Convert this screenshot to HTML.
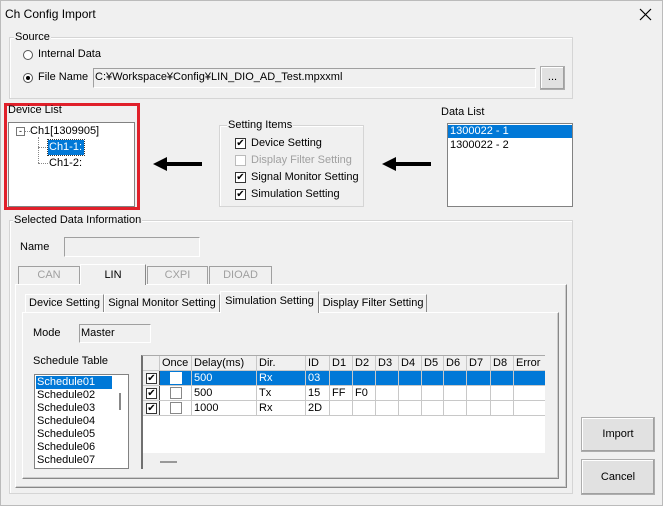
<!DOCTYPE html>
<html><head><style>
*{box-sizing:border-box;margin:0;padding:0}
body{width:663px;height:506px;background:#f0f0f0;font-family:"Liberation Sans",sans-serif;font-size:11px;color:#000;position:relative;overflow:hidden}
.a{position:absolute}
.grp{position:absolute;border:1px solid #d5d5d5;box-shadow:inset 1px 1px 0 #fff}
.lbl{position:absolute;background:#f0f0f0;padding:0 1px;white-space:nowrap}
.sunk{position:absolute;border-top:1px solid #a0a0a0;border-left:1px solid #a0a0a0;border-right:1px solid #fff;border-bottom:1px solid #fff;background:#fff}
.cb{position:absolute;width:11px;height:11px;border:1px solid #333;background:#fff;font-size:10px;line-height:9px;text-align:center;color:#000}
.btn{position:absolute;background:#e1e1e1;border:1px solid #adadad;box-shadow:inset -1px -1px 0 #a0a0a0,inset 1px 1px 0 #fff;text-align:center}
.tab{position:absolute;border:1px solid #a0a0a0;border-bottom:none;background:#f0f0f0;text-align:center;white-space:nowrap}
table{border-collapse:collapse;font-size:11px}
td{border:1px solid #c8c8c8;height:15px;padding:0 2px;white-space:nowrap}
</style></head><body>
<div class="a" style="left:0;top:0;width:663px;height:506px;border:1px solid #bbb"></div>
<div class="a" style="left:5px;top:7px;font-size:12px">Ch Config Import</div>
<svg class="a" style="left:639px;top:8px" width="13" height="13"><path d="M1 1L12 12M12 1L1 12" stroke="#000" stroke-width="1.2"/></svg>

<div class="grp" style="left:9px;top:37px;width:564px;height:62px"></div>
<div class="lbl" style="left:14px;top:31px">Source</div>
<div class="a" style="left:23px;top:50px;width:10px;height:10px;border:1px solid #555;border-radius:50%;background:#fff"></div>
<div class="a" style="left:38px;top:48px">Internal Data</div>
<div class="a" style="left:23px;top:73px;width:10px;height:10px;border:1px solid #555;border-radius:50%;background:#fff"><div class="a" style="left:2px;top:2px;width:4px;height:4px;border-radius:50%;background:#000"></div></div>
<div class="a" style="left:38px;top:71px">File Name</div>
<div class="sunk" style="left:93px;top:68px;width:443px;height:20px;background:#f0f0f0;padding:2px 1px">C:¥Workspace¥Config¥LIN_DIO_AD_Test.mpxxml</div>
<div class="btn" style="left:540px;top:66px;width:25px;height:24px;line-height:20px">...</div>

<div class="a" style="left:4px;top:103px;width:136px;height:107px;border:3px solid #e0202a"></div>
<div class="a" style="left:8px;top:104px">Device List</div>
<div class="sunk" style="left:8px;top:122px;width:127px;height:85px;border-color:#828282"></div>
<div class="a" style="left:16px;top:127px;width:9px;height:9px;border:1px solid #777;background:#fff;font-size:9px;line-height:6px;text-align:center">-</div>
<div class="a" style="left:25px;top:131px;width:5px;border-top:1px dotted #888"></div>
<div class="a" style="left:30px;top:125px">Ch1[1309905]</div>
<div class="a" style="left:38px;top:137px;height:26px;border-left:1px dotted #888"></div>
<div class="a" style="left:38px;top:147px;width:10px;border-top:1px dotted #888"></div>
<div class="a" style="left:38px;top:163px;width:10px;border-top:1px dotted #888"></div>
<div class="a" style="left:48px;top:140px;width:36px;height:15px;background:#0078d7;color:#fff;outline:1px dotted #333;padding:1px 1px">Ch1-1:</div>
<div class="a" style="left:49px;top:157px">Ch1-2:</div>

<div class="grp" style="left:219px;top:125px;width:145px;height:82px"></div>
<div class="lbl" style="left:227px;top:119px">Setting Items</div>
<div class="cb" style="left:235px;top:138px">✔</div><div class="a" style="left:251px;top:137px">Device Setting</div>
<div class="cb" style="left:235px;top:155px;border-color:#bbb"></div><div class="a" style="left:251px;top:154px;color:#a0a0a0">Display Filter Setting</div>
<div class="cb" style="left:235px;top:172px">✔</div><div class="a" style="left:251px;top:171px">Signal Monitor Setting</div>
<div class="cb" style="left:235px;top:189px">✔</div><div class="a" style="left:251px;top:188px">Simulation Setting</div>

<svg class="a" style="left:150px;top:156px" width="54" height="16"><rect x="14" y="6" width="38" height="4"/><path d="M3 8 L17 1 L17 15 Z"/></svg>
<svg class="a" style="left:379px;top:156px" width="54" height="16"><rect x="14" y="6" width="38" height="4"/><path d="M3 8 L17 1 L17 15 Z"/></svg>

<div class="a" style="left:441px;top:106px">Data List</div>
<div class="sunk" style="left:447px;top:123px;width:126px;height:84px;border-color:#828282"></div>
<div class="a" style="left:448px;top:125px;width:124px;height:13px;background:#0078d7;color:#fff;padding-left:2px;line-height:13px">1300022 - 1</div>
<div class="a" style="left:450px;top:139px">1300022 - 2</div>

<div class="grp" style="left:9px;top:220px;width:564px;height:274px"></div>
<div class="lbl" style="left:13px;top:214px">Selected Data Information</div>
<div class="a" style="left:20px;top:241px">Name</div>
<div class="sunk" style="left:64px;top:237px;width:136px;height:20px;background:#f0f0f0"></div>

<div class="a" style="left:15px;top:284px;width:552px;height:204px;border:1px solid #fff;border-right-color:#888;border-bottom-color:#888;box-shadow:inset -1px -1px 0 #ccc"></div>
<div class="tab" style="left:18px;top:266px;width:62px;height:18px;color:#a0a0a0;line-height:16px">CAN</div>
<div class="tab" style="left:80px;top:264px;width:66px;height:21px;line-height:20px;border-color:#fff #888 #888 #fff">LIN</div>
<div class="tab" style="left:147px;top:266px;width:61px;height:18px;color:#a0a0a0;line-height:16px">CXPI</div>
<div class="tab" style="left:209px;top:266px;width:63px;height:18px;color:#a0a0a0;line-height:16px">DIOAD</div>

<div class="a" style="left:22px;top:312px;width:537px;height:167px;border:1px solid #fff;border-right-color:#888;border-bottom-color:#888;box-shadow:inset -1px -1px 0 #ccc"></div>
<div class="tab" style="left:25px;top:294px;width:79px;height:18px;line-height:17px;border-color:#fff #888 #888 #fff">Device Setting</div>
<div class="tab" style="left:104px;top:294px;width:116px;height:18px;line-height:17px;border-color:#fff #888 #888 #fff">Signal Monitor Setting</div>
<div class="tab" style="left:220px;top:291px;width:99px;height:22px;line-height:18px;border-color:#fff #888 #888 #fff">Simulation Setting</div>
<div class="tab" style="left:319px;top:294px;width:108px;height:18px;line-height:17px;border-color:#fff #888 #888 #fff">Display Filter Setting</div>

<div class="a" style="left:33px;top:327px">Mode</div>
<div class="sunk" style="left:79px;top:324px;width:72px;height:19px;background:#f0f0f0;padding:2px 1px">Master</div>
<div class="a" style="left:33px;top:355px">Schedule Table</div>
<div class="sunk" style="left:34px;top:374px;width:95px;height:95px;overflow:hidden;border-color:#828282">
<div style="position:absolute;left:1px;top:1px;width:76px;height:13px;background:#0078d7"></div>
<div style="position:absolute;left:2px;top:1px;line-height:13px"><span style="color:#fff">Schedule01</span><br>Schedule02<br>Schedule03<br>Schedule04<br>Schedule05<br>Schedule06<br>Schedule07<br>Schedule08</div>
<div style="position:absolute;left:84px;top:18px;width:2px;height:17px;background:#888"></div>
</div>

<div class="a" style="left:141px;top:355px;width:404px;height:114px;background:#f0f0f0;border-left:2px solid #707070;border-top:1px solid #aaa;overflow:hidden">
<div class="a" style="left:0;top:0;width:402px;height:97px;background:#fff"></div>
<table class="a" style="left:-1px;top:-1px;width:404px">
<tr style="background:#f0f0f0"><td style="width:17px"></td><td style="width:32px">Once</td><td style="width:65px">Delay(ms)</td><td style="width:49px">Dir.</td><td style="width:24px">ID</td><td style="width:23px">D1</td><td style="width:23px">D2</td><td style="width:23px">D3</td><td style="width:23px">D4</td><td style="width:22px">D5</td><td style="width:23px">D6</td><td style="width:24px">D7</td><td style="width:23px">D8</td><td>Error</td></tr>
<tr style="background:#0078d7;color:#fff"><td style="background:#f0f0f0;border-right-color:#444"><div class="cb" style="position:relative;left:1px">✔</div></td><td><div style="width:12px;height:12px;background:#fff;margin-left:8px"></div></td><td>500</td><td>Rx</td><td>03</td><td></td><td></td><td></td><td></td><td></td><td></td><td></td><td></td><td></td></tr>
<tr><td style="background:#f0f0f0;border-right-color:#444"><div class="cb" style="position:relative;left:1px">✔</div></td><td><div style="width:12px;height:12px;border:1px solid #888;margin-left:8px"></div></td><td>500</td><td>Tx</td><td>15</td><td>FF</td><td>F0</td><td></td><td></td><td></td><td></td><td></td><td></td><td></td></tr>
<tr><td style="background:#f0f0f0;border-right-color:#444"><div class="cb" style="position:relative;left:1px">✔</div></td><td><div style="width:12px;height:12px;border:1px solid #888;margin-left:8px"></div></td><td>1000</td><td>Rx</td><td>2D</td><td></td><td></td><td></td><td></td><td></td><td></td><td></td><td></td><td></td></tr>
</table>
<div class="a" style="left:17px;top:105px;width:17px;height:2px;background:#999"></div>
</div>

<div class="btn" style="left:581px;top:417px;width:74px;height:35px;line-height:33px">Import</div>
<div class="btn" style="left:581px;top:459px;width:74px;height:36px;line-height:34px">Cancel</div>
</body></html>
